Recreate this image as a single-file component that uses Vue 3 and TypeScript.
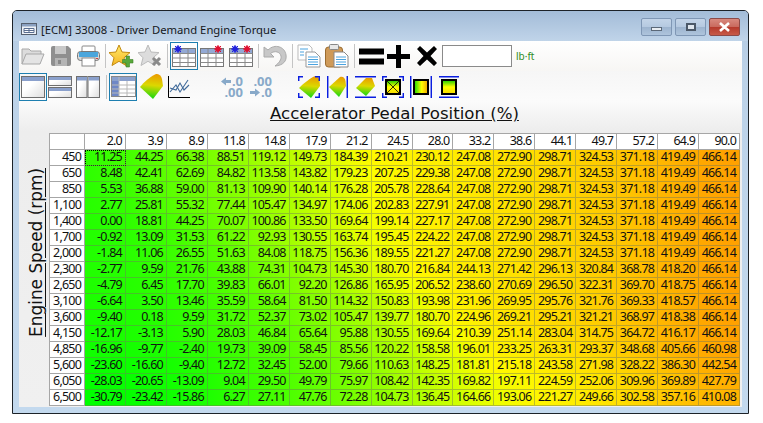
<script setup lang="ts">
const cols = ['2.0','3.9','8.9','11.8','14.8','17.9','21.2','24.5','28.0','33.2','38.6','44.1','49.7','57.2','64.9','90.0']
const tail = [247.08,272.90,298.71,324.53,371.18,419.49,466.14]
const raw: [string, number[]][] = [
  ['450',[11.25,44.25,66.38,88.51,119.12,149.73,184.39,210.21,230.12,...tail]],
  ['650',[8.48,42.41,62.69,84.82,113.58,143.82,179.23,207.25,229.38,...tail]],
  ['850',[5.53,36.88,59.00,81.13,109.90,140.14,176.28,205.78,228.64,...tail]],
  ['1,100',[2.77,25.81,55.32,77.44,105.47,134.97,174.06,202.83,227.91,...tail]],
  ['1,400',[0.00,18.81,44.25,70.07,100.86,133.50,169.64,199.14,227.17,...tail]],
  ['1,700',[-0.92,13.09,31.53,61.22,92.93,130.55,163.74,195.45,224.22,...tail]],
  ['2,000',[-1.84,11.06,26.55,51.63,84.08,118.75,156.36,189.55,221.27,...tail]],
  ['2,300',[-2.77,9.59,21.76,43.88,74.31,104.73,145.30,180.70,216.84,244.13,271.42,296.13,320.84,368.78,418.20,466.14]],
  ['2,650',[-4.79,6.45,17.70,39.83,66.01,92.20,126.86,165.95,206.52,238.60,270.69,296.50,322.31,369.70,418.75,466.14]],
  ['3,100',[-6.64,3.50,13.46,35.59,58.64,81.50,114.32,150.83,193.98,231.96,269.95,295.76,321.76,369.33,418.57,466.14]],
  ['3,600',[-9.40,0.18,9.59,31.72,52.37,73.02,105.47,139.77,180.70,224.96,269.21,295.21,321.21,368.97,418.38,466.14]],
  ['4,150',[-12.17,-3.13,5.90,28.03,46.84,65.64,95.88,130.55,169.64,210.39,251.14,283.04,314.75,364.72,416.17,466.14]],
  ['4,850',[-16.96,-9.77,-2.40,19.73,39.09,58.45,85.56,120.22,158.58,196.01,233.25,263.31,293.37,348.68,405.66,460.98]],
  ['5,600',[-23.60,-16.60,-9.40,12.72,32.45,52.00,79.66,110.63,148.25,181.81,215.18,243.58,271.98,328.22,386.30,442.54]],
  ['6,050',[-28.03,-20.65,-13.09,9.04,29.50,49.79,75.97,108.42,142.35,169.82,197.11,224.59,252.06,309.96,369.89,427.79]],
  ['6,500',[-30.79,-23.42,-15.86,6.27,27.11,47.76,72.28,104.73,136.45,164.66,193.06,221.27,249.66,302.58,357.16,410.08]],
]
const MIN = -30.79, MAX = 466.14, MID = 195
function color(v: number): string {
  if (v <= MID) {
    const r = Math.round(255 * (v - MIN) / (MID - MIN))
    return `rgb(${r},255,0)`
  }
  const g = Math.round(250 - 90 * (v - MID) / (MAX - MID))
  return `rgb(255,${g},0)`
}
function cellStyle(vals: number[], i: number) {
  const l = (vals[Math.max(i - 1, 0)] + vals[i]) / 2
  const r = (vals[Math.min(i + 1, vals.length - 1)] + vals[i]) / 2
  return { background: `linear-gradient(90deg, ${color(l)}, ${color(r)})` }
}
const rows = raw.map(([label, vals]) => ({
  label,
  cells: vals.map((v, i) => ({ text: v.toFixed(2), style: cellStyle(vals, i) })),
}))
const tableIcons = [
  { cls: 'tb-sel', left: '#2222dd', right: '' },
  { cls: '', left: '', right: '#e01030' },
  { cls: '', left: '#2222dd', right: '#e01030' },
]
</script>

<template>
  <div class="window">
    <div class="titlebar">
      <svg class="app-ic" width="16" height="16" viewBox="0 0 16 16">
        <rect x=".5" y="2.500" width="15" height="11" fill="#eef2f7" stroke="#56606e"/>
        <rect x="1" y="3" width="14" height="2.500" fill="#8aa0c0"/>
        <path d="M3 7.500h10v4H3zM8 7.500v4M3 9.500h10" fill="#fff" stroke="#5a6e90"/>
      </svg>
      <span class="title">[ECM] 33008 - Driver Demand Engine Torque</span>
      <div class="caps">
        <div class="cap cap-min"><i class="g-min"></i></div>
        <div class="cap cap-max"><i class="g-max"></i></div>
        <div class="cap cap-close"><svg width="13" height="10" viewBox="0 0 13 10"><path d="M2 1l9 8M11 1L2 9" stroke="#fff" stroke-width="2.600"/></svg></div>
      </div>
    </div>
    <div class="client">
      <div class="bar bar1">
        <svg class="ic" style="margin-left:2px" width="24" height="20" viewBox="0 0 24 20">
          <path d="M1 18V3h7l2 2h10v3" fill="#dcdcdc" stroke="#a8a8a8"/>
          <path d="M1 18l4-10h18l-4 10z" fill="#e4e4e4" stroke="#a8a8a8"/>
        </svg>
        <svg class="ic" style="margin-left:6px" width="20" height="20" viewBox="0 0 20 20">
          <path d="M0 2a2 2 0 012-2h15l3 3v15a2 2 0 01-2 2H2a2 2 0 01-2-2z" fill="#8f8f8f"/>
          <rect x="4" y="0" width="11" height="8" fill="#c8c8c8"/>
          <rect x="4" y="12" width="12" height="8" fill="#b4b4b4"/>
          <rect x="7" y="14" width="3" height="4" fill="#888"/>
        </svg>
        <svg class="ic" style="margin-left:6px" width="23" height="22" viewBox="0 0 23 22">
          <rect x="5" y="1" width="13" height="7" rx="1" fill="#fff" stroke="#888"/>
          <rect x=".5" y="6.500" width="22" height="9" rx="3" fill="#d8d8d8" stroke="#777"/>
          <rect x="2" y="7" width="19" height="5" fill="#4ba6dc"/>
          <rect x="5" y="13" width="13" height="8" fill="#fff" stroke="#888"/>
          <rect x="19" y="13" width="2" height="1" fill="#d04040"/>
        </svg>
        <span class="sep" style="margin:0 3px 0 5px"></span>
        <svg class="ic" width="25" height="24" viewBox="0 0 25 24">
          <path d="M10 1l3 7 8 .6-6 5.200 2 7.700-7-4.200-7 4.200 2-7.700L0 8.600l7-.6z" fill="url(#star)" stroke="#c28a10"/>
          <path d="M17 12h3.500v3.500H24V19h-3.500v4H17v-4h-3.500v-3.500H17z" fill="#58a83a" stroke="#3d7f26" stroke-width=".6"/>
          <defs>
            <linearGradient id="star" x1="0" y1="0" x2="0" y2="1"><stop offset="0" stop-color="#ffe96a"/><stop offset="1" stop-color="#f5b622"/></linearGradient>
            <linearGradient id="surf" x1=".6" y1="0" x2=".5" y2="1"><stop offset="0" stop-color="#eb9c00"/><stop offset=".45" stop-color="#dcd800"/><stop offset="1" stop-color="#10d810"/></linearGradient>
            <linearGradient id="hz" x1="0" y1="0" x2="1" y2="0"><stop offset="0" stop-color="#10d800"/><stop offset=".55" stop-color="#ffff00"/><stop offset="1" stop-color="#f0a000"/></linearGradient>
            <linearGradient id="vt" x1="0" y1="0" x2="0" y2="1"><stop offset="0" stop-color="#10c800"/><stop offset=".5" stop-color="#ffff00"/><stop offset="1" stop-color="#f8d800"/></linearGradient>
            <linearGradient id="pane" x1="0" y1="0" x2="1" y2="1"><stop offset=".4" stop-color="#fff"/><stop offset="1" stop-color="#ddd"/></linearGradient>
          </defs>
        </svg>
        <svg class="ic" style="margin-left:4px" width="24" height="24" viewBox="0 0 24 24">
          <path d="M10 1l3 7 8 .6-6 5.200 2 7.700-7-4.200-7 4.200 2-7.700L0 8.600l7-.6z" fill="#dcdcdc" stroke="#bbb"/>
          <path d="M15 14l7 7M22 14l-7 7" stroke="#8a8a8a" stroke-width="3"/>
        </svg>
        <span class="sep" style="margin:0 2px 0 5px"></span>
        <template v-for="(t, i) in tableIcons" :key="i">
          <span class="slot" :class="t.cls" :style="{ marginLeft: i === 2 ? '3px' : i === 1 ? '1px' : '0' }">
            <svg width="24" height="22" viewBox="0 0 24 22">
              <rect x=".5" y="3.500" width="23" height="18" fill="#fff" stroke="#777"/>
              <rect x="1" y="4" width="22" height="4" fill="#93a9d4"/>
              <path d="M.5 8.500h23M.5 13h23M.5 17.500h23M8 4v17M16 4v17" stroke="#8a8a8a" fill="none"/>
              <g v-if="t.left" :fill="t.left" :stroke="t.left"><circle cx="6" cy="4" r="2.400"/><path d="M6 0v8M2 4h8M3 1l6 6M9 1L3 7" stroke-width="1"/></g>
              <g v-if="t.right" :fill="t.right" :stroke="t.right"><circle cx="18" cy="4" r="2.400"/><path d="M18 0v8M14 4h8M15 1l6 6M21 1l-6 6" stroke-width="1"/></g>
            </svg>
          </span>
        </template>
        <span class="sep" style="margin:0 4px 0 4px"></span>
        <svg class="ic" width="24" height="22" viewBox="0 0 24 22">
          <path d="M1 2l0 10 10 0-3.500-3.500C12 5 17 7 18 11c.7 3.500-2 7-6 10 8-.5 12-5 11-11C22 2 12-2 5 5z" fill="#c8c8c8" stroke="#aaa"/>
        </svg>
        <span class="sep" style="margin:0 4px 0 5px"></span>
        <svg class="ic" width="24" height="24" viewBox="0 0 24 24">
          <path d="M1 1h11l3 3v12H1z" fill="#fff" stroke="#bbb"/>
          <path d="M9 8h9l5 5v10H9z" fill="#fff" stroke="#999"/>
          <path d="M3 5h8M3 8h4M3 11h4M11 13h10M11 15.500h10M11 18h10M11 20.500h10" stroke="#4aa3df"/>
        </svg>
        <svg class="ic" style="margin-left:4px" width="24" height="24" viewBox="0 0 24 24">
          <rect x=".5" y="3" width="17" height="20" rx="3" fill="#cf9a58" stroke="#9a6c30"/>
          <rect x="4.500" y="0.500" width="9" height="5" rx="1" fill="#e8e8e8" stroke="#888"/>
          <path d="M9 8h10l4 4v11H9z" fill="#fff" stroke="#888"/>
          <path d="M11 13h10M11 15.500h10M11 18h10M11 20.500h10" stroke="#4aa3df"/>
        </svg>
        <span class="sep" style="margin:0 4px 0 5px"></span>
        <svg class="ic" width="25" height="20" viewBox="0 0 25 20"><path d="M0 2.500h25v6H0zM0 12.500h25v6H0z" fill="#000"/></svg>
        <svg class="ic" style="margin-left:3px" width="23" height="23" viewBox="0 0 23 23"><path d="M9 0h5v9h9v5h-9v9H9v-9H0V9h9z" fill="#000"/></svg>
        <svg class="ic" style="margin-left:7px" width="20" height="20" viewBox="0 0 20 20"><path d="M3 0l7 6.500L17 0l3 3-6.500 7 6.500 7-3 3-7-6.500L3 20l-3-3 6.500-7L0 3z" fill="#000"/></svg>
        <input class="value" type="text" />
        <span class="unit">lb·ft</span>
      </div>
      <div class="bar bar2">
        <span class="slot tb-sel">
          <svg width="24" height="24" viewBox="0 0 24 24">
            <rect x=".5" y="1.500" width="23" height="21" fill="url(#pane)" stroke="#6e6e6e"/>
            <rect x="1" y="2" width="22" height="4" fill="#8aa0cc"/>
          </svg>
        </span>
        <svg class="ic" style="margin-left:1px" width="24" height="24" viewBox="0 0 24 24">
          <rect x=".5" y="1.500" width="23" height="9" fill="url(#pane)" stroke="#6e6e6e"/>
          <rect x="1" y="2" width="22" height="3" fill="#8aa0cc"/>
          <rect x=".5" y="12.500" width="23" height="10" fill="url(#pane)" stroke="#6e6e6e"/>
          <rect x="1" y="13" width="22" height="3" fill="#8aa0cc"/>
        </svg>
        <svg class="ic" style="margin-left:4px" width="24" height="24" viewBox="0 0 24 24">
          <rect x=".5" y="1.500" width="10.500" height="21" fill="url(#pane)" stroke="#6e6e6e"/>
          <rect x="1" y="2" width="10" height="3.500" fill="#8aa0cc"/>
          <rect x="12" y="1.500" width="11.500" height="21" fill="url(#pane)" stroke="#6e6e6e"/>
          <rect x="12.500" y="2" width="10.500" height="3.500" fill="#8aa0cc"/>
        </svg>
        <span class="sep" style="margin:0 2px 0 6px"></span>
        <span class="slot tb-sel">
          <svg width="25" height="24" viewBox="0 0 25 24">
            <rect x=".5" y="1.500" width="24" height="20" fill="#fff" stroke="#888"/>
            <rect x="1" y="2" width="23" height="4" fill="#8aa0cc"/>
            <rect x="1" y="6" width="7" height="15" fill="#6f87c6"/>
            <path d="M1 10h23M1 14h23M1 18h23M8 2v19M16 6v15" stroke="#b8b8b8" fill="none"/>
          </svg>
        </span>
        <svg class="ic" style="margin-left:3px" width="23" height="25" viewBox="0 0 23 25"><path d="M0 13C4 8 10 3 15 .5 19-1 21 2 22 5l1 7-10 13z" fill="url(#surf)"/></svg>
        <svg class="ic" style="margin-left:5px" width="22" height="22" viewBox="0 0 22 22">
          <path d="M.5 0v21.500H22" fill="none" stroke="#000"/>
          <path d="M2 16l6-7 4 7 8-12" fill="none" stroke="#406a9a" stroke-width="1.100"/>
          <path d="M2 12l6 2 4-7 4 7 5-5" fill="none" stroke="#406a9a" stroke-width="1.100"/>
        </svg>
        <div class="deci" style="margin-left:29px">
          <div class="deci-row"><svg width="10" height="9" viewBox="0 0 10 9"><path d="M0 4.500L5 .5v2.500h5v3H5v2.500z" fill="#88a9c9"/></svg><span>.0</span></div>
          <div class="deci-row"><span>.00</span></div>
        </div>
        <div class="deci" style="margin-left:5px">
          <div class="deci-row"><span>.00</span></div>
          <div class="deci-row"><svg width="10" height="9" viewBox="0 0 10 9"><path d="M10 4.500L5 .5v2.500H0v3h5v2.500z" fill="#88a9c9"/></svg><span>.0</span></div>
        </div>
        <svg class="ic" style="margin-left:26px" width="22" height="22" viewBox="0 0 22 22">
          <path d="M1 12C5 8 11 3 16 .5c3-1 5 1 5.500 4L22 10 13 22z" fill="url(#surf)"/>
          <path d="M0 .7h5M.7 0v5M22 .7h-5M21.300 0v5M0 21.300h5M.7 22v-5M22 21.300h-5M21.300 22v-5" stroke="#0a1ee0" stroke-width="1.500" fill="none"/>
        </svg>
        <svg class="ic" style="margin-left:7px" width="21" height="22" viewBox="0 0 21 22">
          <path d="M2 11L13 1c3-1 5 1 5.500 4L19 10l-7 11z" fill="url(#surf)"/>
          <path d="M.7 0v22M20.300 0v22" stroke="#0a1ee0" stroke-width="1.500"/>
        </svg>
        <svg class="ic" style="margin-left:7px" width="21" height="22" viewBox="0 0 21 22">
          <path d="M1 12L11 2h6l3 8-9 10z" fill="url(#surf)"/>
          <path d="M0 .7h21M0 21.300h21" stroke="#0a1ee0" stroke-width="1.500"/>
        </svg>
        <svg class="ic" style="margin-left:6px" width="22" height="22" viewBox="0 0 22 22">
          <path d="M0 .7h5M.7 0v5M22 .7h-5M21.300 0v5M0 21.300h5M.7 22v-5M22 21.300h-5M21.300 22v-5" stroke="#0a1ee0" stroke-width="1.500" fill="none"/>
          <rect x="4" y="4" width="14" height="14" fill="url(#vt)" stroke="#000" stroke-width="2"/>
          <path d="M5 5l12 12M17 5L5 17" stroke="#000" stroke-width=".8"/>
        </svg>
        <svg class="ic" style="margin-left:6px" width="22" height="22" viewBox="0 0 22 22">
          <path d="M.7 0v22M21.300 0v22" stroke="#0a1ee0" stroke-width="1.500"/>
          <rect x="4" y="4" width="14" height="14" fill="url(#hz)" stroke="#000" stroke-width="2"/>
        </svg>
        <svg class="ic" style="margin-left:7px" width="20" height="22" viewBox="0 0 20 22">
          <path d="M0 .7h20M0 21.300h20" stroke="#0a1ee0" stroke-width="1.500"/>
          <rect x="3" y="4" width="14" height="14" fill="url(#vt)" stroke="#000" stroke-width="2"/>
        </svg>
      </div>
      <div class="plot">
        <div class="y-axis"><span class="y-label">Engine Speed (rpm)</span></div>
        <div class="plot-main">
          <div class="x-label"><span>Accelerator Pedal Position (%)</span></div>
          <div class="grid">
            <div class="h corner"></div>
            <div v-for="c in cols" :key="c" class="h">{{ c }}</div>
            <template v-for="(r, ri) in rows" :key="r.label">
              <div class="h rowh">{{ r.label }}</div>
              <div v-for="(c, ci) in r.cells" :key="ci" class="d" :class="{ focus: ri === 0 && ci === 0 }" :style="c.style">{{ c.text }}</div>
            </template>
          </div>
        </div>
      </div>
    </div>
  </div>
</template>

<style>
html, body { margin: 0; background: #fff; }
</style>

<style scoped>
.window {
  width: 737px;
  height: 404px;
  margin: 10px 0 0 12px;
  box-sizing: border-box;
  border: 1px solid #1c2228;
  border-radius: 5px 5px 0 0;
  background: linear-gradient(180deg, #9db8d6 0, #b7cde4 30px, #bcd2e8 60px, #c3d9ee 100%);
  display: flex;
  flex-direction: column;
  overflow: hidden;
  font-family: "Noto Sans", sans-serif;
}
.titlebar {
  height: 30px;
  flex: none;
  display: flex;
  align-items: center;
  padding: 6px 0 0 8px;
  box-sizing: border-box;
  background: linear-gradient(180deg, #a3bcd8, #c0d4e9);
}
.title { font-size: 11.25px; color: #15181c; margin-left: 4px; white-space: nowrap; }
.app-ic { flex: none; }
.caps { margin-left: auto; display: flex; gap: 3px; margin-right: 8px; margin-top: -5px; }
.cap {
  width: 31px; height: 18px; box-sizing: border-box;
  border: 1px solid #7f97b5; border-radius: 2px;
  display: flex; align-items: center; justify-content: center;
  background: linear-gradient(180deg, #c3d4e8 0, #b5c9e0 50%, #9db4cf 52%, #aec4dc 100%);
}
.cap-close { border-color: #8c4a48; background: linear-gradient(180deg, #d8897e 0, #c96a5e 48%, #b63a2c 52%, #c75a48 100%); width: 31px; }
.g-min { display: block; width: 11px; height: 4px; margin-top: 4px; border: 1px solid #5b6878; background: #e8edf2; box-sizing: border-box; }
.g-max { display: block; width: 10px; height: 8px; border: 2px solid #4b5868; background: #dfe6ee; box-sizing: border-box; }
.client {
  width: 723px;
  height: 366px;
  margin-left: 6px;
  display: flex;
  flex-direction: column;
  background: #f0f0f0;
}
.bar { display: flex; align-items: center; flex: none; box-sizing: border-box; }
.bar1 { height: 30px; background: linear-gradient(180deg, #fff, #f7f6f4); }
.bar2 { height: 30px; padding-top: 1px; background: linear-gradient(180deg, #f6f6f6, #fbfbfb); }
.ic { flex: none; display: block; }
.sep { width: 1px; height: 24px; background: #c4c4c4; flex: none; }
.slot {
  width: 28px; height: 28px; box-sizing: border-box;
  flex: none; display: flex; align-items: center; justify-content: center;
}
.slot.tb-sel { border: 1px solid #1e7fb0; }
.bar1 .slot:not(.tb-sel) { width: 26px; }
.value {
  width: 70px; height: 22px; box-sizing: border-box; margin: 0 0 0 5px; padding: 0;
  border: 1px solid #8a8a8a; background: #fff;
}
.unit { font-size: 10px; color: #2e8b22; margin-left: 4px; }
.deci { width: 24px; flex: none; display: flex; flex-direction: column; font: 700 13px/11px "Noto Sans", sans-serif; color: #88a9c9; }
.deci-row { height: 11px; display: flex; align-items: center; justify-content: flex-end; gap: 1px; }
.plot { flex: 1; display: flex; background: linear-gradient(180deg, #fbfbfb 0, #ededed 30px, #f0f0f0 100%); min-height: 0; }
.y-axis { width: 30px; flex: none; display: flex; align-items: center; justify-content: flex-end; }
.y-label {
  writing-mode: vertical-rl;
  transform: rotate(180deg);
  font: 16.9px/18px "DejaVu Sans", sans-serif;
  text-decoration: underline;
  color: #111;
  white-space: nowrap;
  margin-right: 4px;
  margin-bottom: 4px;
}
.plot-main { flex: none; width: 692px; display: flex; flex-direction: column; }
.x-label {
  height: 32px; flex: none; box-sizing: border-box; padding-top: 3px; width: 691px; text-align: center;
  font: 16.6px/20px "DejaVu Sans", sans-serif; color: #111;
}
.x-label span { text-decoration: underline; }
.grid {
  display: grid;
  grid-template-columns: 35px repeat(16, 40.95px);
  grid-auto-rows: 16px;
  border-top: 1px solid #a6a6a6;
  border-left: 1px solid #a6a6a6;
  width: 691.2px;
  box-sizing: border-box;
  font: 12.5px/14px "Noto Sans", sans-serif;
  letter-spacing: -.8px;
  color: #111;
}
.h {
  background: #fff;
  border-right: 1px solid #a6a6a6;
  border-bottom: 1px solid #a6a6a6;
  text-align: right;
  padding-right: 3px;
  box-sizing: border-box;
}
.rowh { padding-right: 3px; }
.d {
  position: relative;
  text-align: right;
  padding-right: 4px;
  box-sizing: border-box;
  white-space: nowrap;
}
.d::after {
  content: "";
  position: absolute;
  inset: 0;
  border-right: 1px solid rgba(110, 120, 90, .45);
  border-bottom: 1px solid rgba(110, 120, 90, .45);
}
.focus { outline: 1px dotted #000; outline-offset: -1px; }
</style>
